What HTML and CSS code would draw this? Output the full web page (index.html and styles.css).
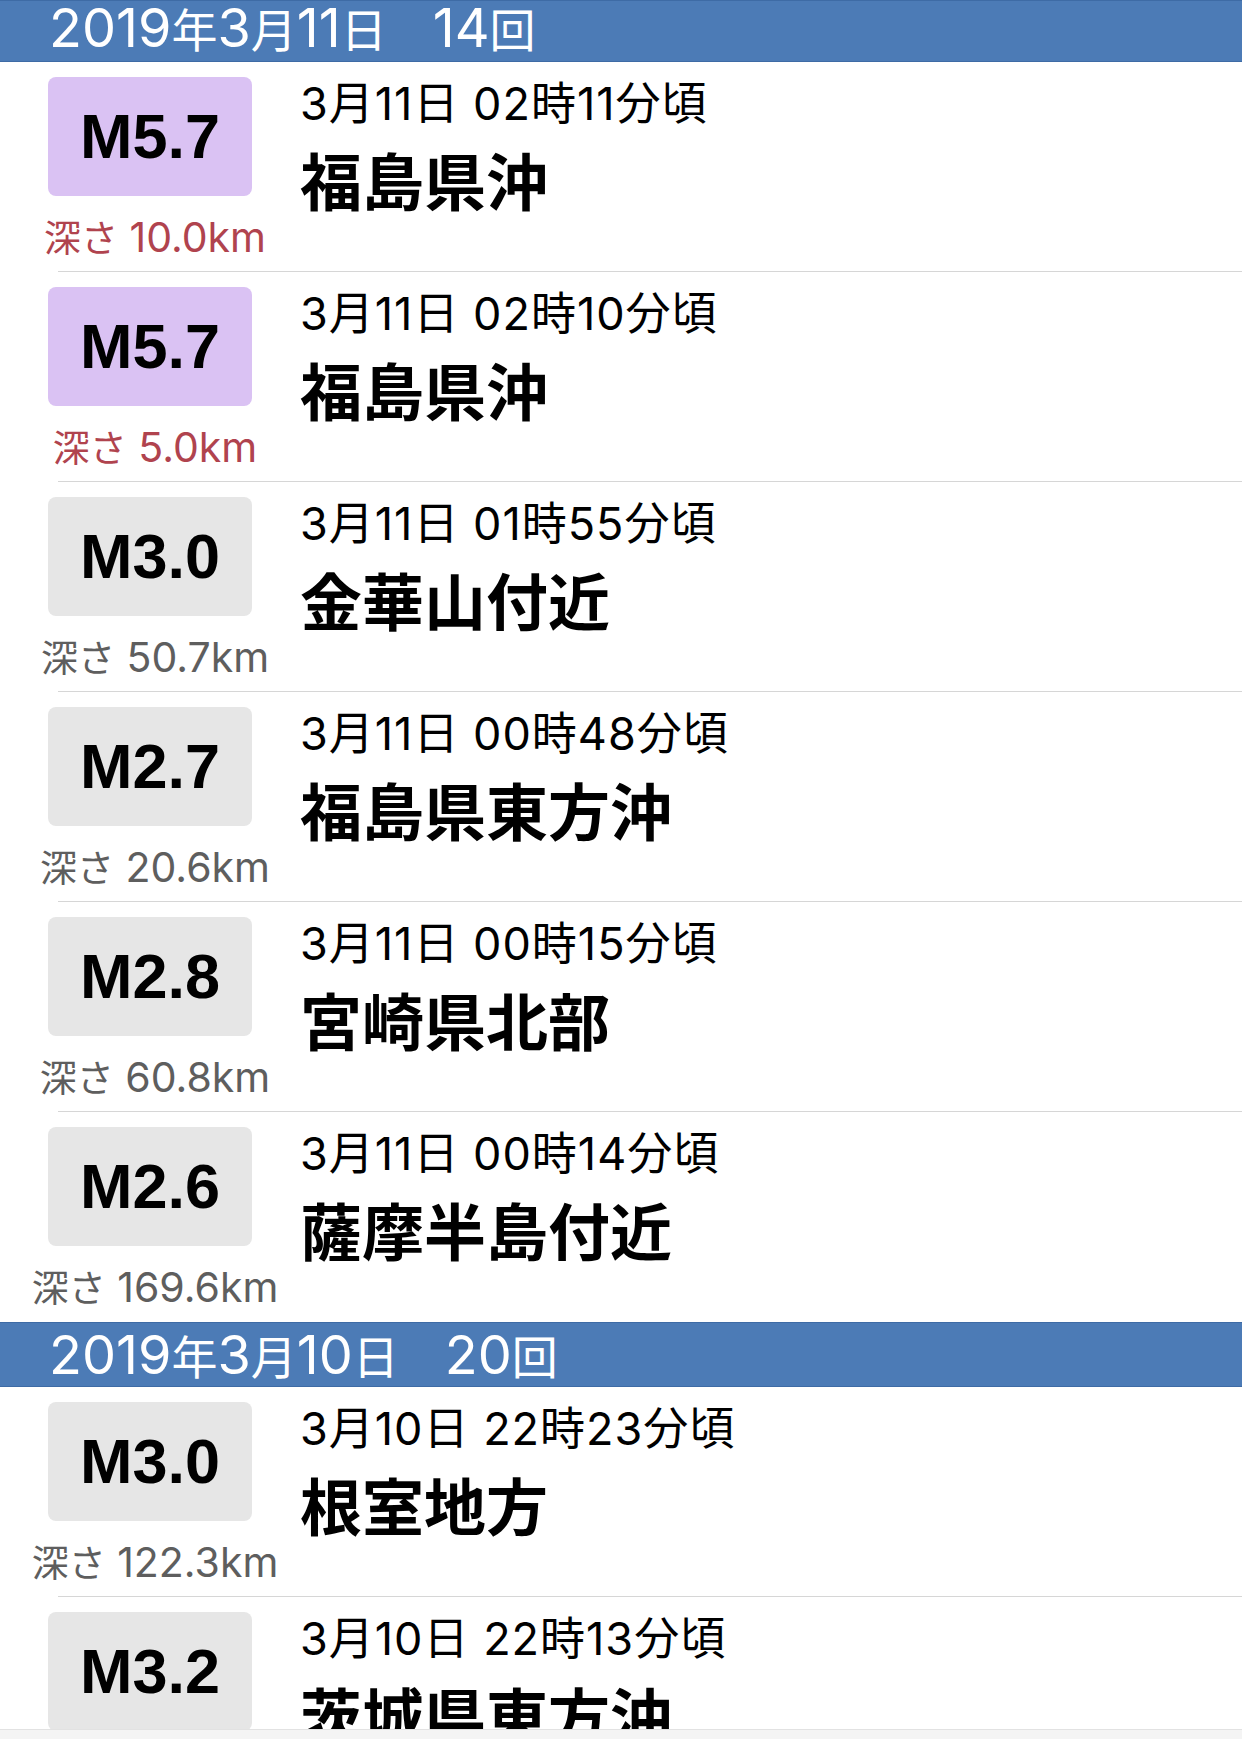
FILE: index.html
```html
<!DOCTYPE html>
<html>
<head>
    <title>地震情報</title>
    <link rel="stylesheet" href="styles.css">
</head>
<body>
    <div class="list">
        <section class="day">
            <h2 class="day-head">2019<span class="k">年</span>3<span class="k">月</span>11<span class="k">日　</span>14<span class="k">回</span></h2>
            <div class="quake">
                <div class="mag-col">
                    <div class="mag strong">M5.7</div>
                    <div class="depth shallow"><span class="label">深さ</span> 10.0km</div>
                </div>
                <div class="info">
                    <div class="time">3月11日 02時11分頃</div>
                    <div class="place">福島県沖</div>
                </div>
            </div>
            <div class="quake">
                <div class="mag-col">
                    <div class="mag strong">M5.7</div>
                    <div class="depth shallow"><span class="label">深さ</span> 5.0km</div>
                </div>
                <div class="info">
                    <div class="time">3月11日 02時10分頃</div>
                    <div class="place">福島県沖</div>
                </div>
            </div>
            <div class="quake">
                <div class="mag-col">
                    <div class="mag">M3.0</div>
                    <div class="depth"><span class="label">深さ</span> 50.7km</div>
                </div>
                <div class="info">
                    <div class="time">3月11日 01時55分頃</div>
                    <div class="place">金華山付近</div>
                </div>
            </div>
            <div class="quake">
                <div class="mag-col">
                    <div class="mag">M2.7</div>
                    <div class="depth"><span class="label">深さ</span> 20.6km</div>
                </div>
                <div class="info">
                    <div class="time">3月11日 00時48分頃</div>
                    <div class="place">福島県東方沖</div>
                </div>
            </div>
            <div class="quake">
                <div class="mag-col">
                    <div class="mag">M2.8</div>
                    <div class="depth"><span class="label">深さ</span> 60.8km</div>
                </div>
                <div class="info">
                    <div class="time">3月11日 00時15分頃</div>
                    <div class="place">宮崎県北部</div>
                </div>
            </div>
            <div class="quake">
                <div class="mag-col">
                    <div class="mag">M2.6</div>
                    <div class="depth"><span class="label">深さ</span> 169.6km</div>
                </div>
                <div class="info">
                    <div class="time">3月11日 00時14分頃</div>
                    <div class="place">薩摩半島付近</div>
                </div>
            </div>
        </section>
        <section class="day">
            <h2 class="day-head">2019<span class="k">年</span>3<span class="k">月</span>10<span class="k">日　</span>20<span class="k">回</span></h2>
            <div class="quake">
                <div class="mag-col">
                    <div class="mag">M3.0</div>
                    <div class="depth"><span class="label">深さ</span> 122.3km</div>
                </div>
                <div class="info">
                    <div class="time">3月10日 22時23分頃</div>
                    <div class="place">根室地方</div>
                </div>
            </div>
            <div class="quake">
                <div class="mag-col">
                    <div class="mag">M3.2</div>
                    <div class="depth"><span class="label">深さ</span> 34.1km</div>
                </div>
                <div class="info">
                    <div class="time">3月10日 22時13分頃</div>
                    <div class="place">茨城県東方沖</div>
                </div>
            </div>
        </section>
    </div>
    <div class="tabbar"></div>
</body>
</html>
```

FILE: styles.css
```css
body {
    margin: 0;
    font-family: Inter, "Noto Sans CJK JP", sans-serif;
    background-color: #fff;
    color: #000;
    overflow: hidden;
}
.day-head {
    margin: 0;
    height: 63px;
    padding-left: 49px;
    background-color: #4c7bb6;
    border-top: 1px solid #3e6ba5;
    border-bottom: 1px solid #3e6ba5;
    color: #fff;
    font-size: 54px;
    font-weight: 400;
    line-height: 63px;
}
/* first header is pinned and partly scrolled under the status bar */
.day:first-child .day-head {
    height: 60px;
    line-height: 53px;
}
.day-head .k {
    font-family: "Noto Sans CJK JP", sans-serif;
    font-size: 46px;
    line-height: 1;
}
.quake {
    display: flex;
    height: 210px;
    box-sizing: border-box;
    background: linear-gradient(#d6d6d6, #d6d6d6) 58px 100% / calc(100% - 58px) 1px no-repeat;
}
.quake:last-child {
    background: none;
}
.mag-col {
    flex: none;
    width: 300px;
    text-align: center;
}
.mag {
    width: 204px;
    height: 119px;
    margin: 15px auto 0;
    border-radius: 8px;
    background-color: #e6e6e6;
    font-family: "Liberation Sans", Arial, sans-serif;
    font-size: 63px;
    font-weight: bold;
    line-height: 119px;
}
.mag.strong {
    background-color: #dac2f3;
}
.depth {
    margin-top: 18px;
    padding-left: 10px;
    color: #5e5e5e;
    font-size: 41px;
    line-height: 44px;
    white-space: nowrap;
}
.depth.shallow {
    color: #b0434e;
}
.depth .label {
    font-family: "Noto Sans CJK JP", sans-serif;
    font-size: 37px;
}
.info {
    flex: 1;
    padding-top: 16px;
}
.time {
    font-size: 45px;
    letter-spacing: 1px;
    line-height: 52px;
    white-space: nowrap;
}
.place {
    margin-top: 14px;
    font-family: "Noto Sans CJK JP", sans-serif;
    font-size: 62px;
    font-weight: bold;
    line-height: 70px;
    white-space: nowrap;
}
.tabbar {
    position: fixed;
    left: 0;
    right: 0;
    bottom: 0;
    height: 9px;
    background-color: #f4f4f4;
    border-top: 1px solid #e2e2e2;
}
```
